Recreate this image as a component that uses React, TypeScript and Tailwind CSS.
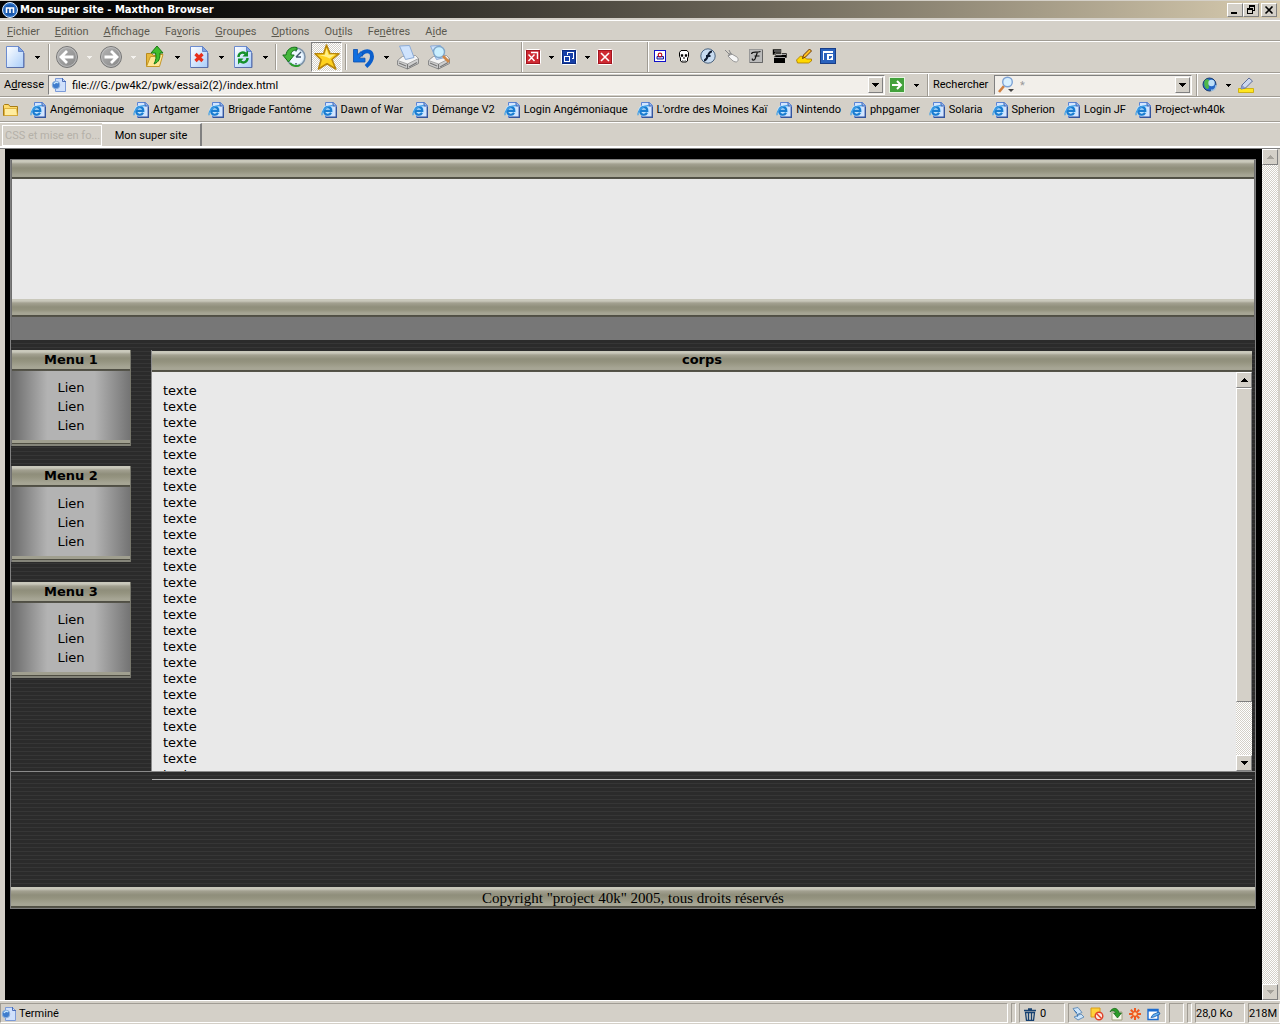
import React from "react";

const raised =
  "border border-t-white border-l-white border-r-[#808080] border-b-[#808080] bg-[#d4d0c8]";
const checker =
  "bg-[conic-gradient(#fff_25%,#d4d0c8_0_50%,#fff_0_75%,#d4d0c8_0)] bg-[length:2px_2px]";
const metal =
  "bg-[linear-gradient(#c9c8bb_0,#c9c8bb_2px,#a3a191_4px,#8f8e7b_8px,#94937f_11px,#a6a594_calc(100%_-_4px),#a6a594_calc(100%_-_2px),#4e4d42_calc(100%_-_2px),#57564c_100%)]";
const stripes =
  "bg-[repeating-linear-gradient(#2b2b2b_0,#2b2b2b_3px,#363636_3px,#363636_4px)]";

function Caret({ faint = false }: { faint?: boolean }) {
  return (
    <svg width="5" height="3" viewBox="0 0 5 3" shapeRendering="crispEdges" aria-hidden="true">
      <path d="M0 0h5v1H4v1H3v1H2V2H1V1H0z" fill={faint ? "#f4f2ee" : "#000"} />
    </svg>
  );
}

function BigCaret({ up = false, faint = false }: { up?: boolean; faint?: boolean }) {
  return (
    <svg width="7" height="4" viewBox="0 0 7 4" shapeRendering="crispEdges" aria-hidden="true">
      <path
        d={up ? "M3 0h1v1h1v1h1v1h1v1H0V3h1V2h1V1h1z" : "M0 0h7v1H6v1H5v1H4v1H3V3H2V2H1V1H0z"}
        fill={faint ? "#a5a29b" : "#000"}
      />
    </svg>
  );
}

function Sheet({ children }: { children?: React.ReactNode }) {
  return (
    <svg width="20" height="24" viewBox="0 0 20 24" aria-hidden="true">
      <defs>
        <linearGradient id="sheet" x1="0" y1="0" x2="1" y2="1">
          <stop offset="0" stopColor="#fff" />
          <stop offset="1" stopColor="#a9cdfa" />
        </linearGradient>
      </defs>
      <path d="M1.5 1.5h12l5 5v16h-17z" fill="url(#sheet)" stroke="#6c8cd0" />
      <path d="M13.5 1.5v5h5z" fill="#7fa4e4" stroke="#5878c0" strokeWidth=".8" />
      <path d="M2 22.5h17V8" fill="none" stroke="#5a6fa8" />
      {children}
    </svg>
  );
}

function RoundArrow({ right = false }: { right?: boolean }) {
  return (
    <svg width="24" height="24" viewBox="0 0 24 24" aria-hidden="true">
      <defs>
        <linearGradient id="disc" x1="0" y1="0" x2="1" y2="1">
          <stop offset="0" stopColor="#b5b5b5" />
          <stop offset="1" stopColor="#858585" />
        </linearGradient>
      </defs>
      <circle cx="12" cy="12" r="10.5" fill="url(#disc)" stroke="#777" />
      <circle cx="12" cy="12" r="9.4" fill="none" stroke="#c4c4c4" strokeWidth=".8" />
      <path
        d={right ? "M5.5 12h12M12 6l6 6-6 6" : "M18.5 12h-12M12 6l-6 6 6 6"}
        fill="none"
        stroke="#fff"
        strokeWidth="2.8"
      />
    </svg>
  );
}

function FolderUp() {
  return (
    <svg width="22" height="24" viewBox="0 0 22 24" aria-hidden="true">
      <path d="M2.5 21.5v-13h5l2 2h7v3" fill="#e7b93c" stroke="#b98a1c" />
      <path d="M2.5 21.5l4-10h5l1.500-2h6l-3.500 12z" fill="#ffe795" stroke="#c6982a" />
      <path d="M7 8l6-7 6 7h-3c0 6-1 9-6 11 2-4 2.500-7 1.500-11z" fill="#3fbd2c" stroke="#187814" />
    </svg>
  );
}

function History() {
  return (
    <svg width="24" height="24" viewBox="0 0 24 24" aria-hidden="true">
      <circle cx="14" cy="12" r="9" fill="#d3e6f6" stroke="#7d92a8" strokeWidth="1.500" />
      <circle cx="14" cy="12" r="7" fill="#eef7ff" />
      <path d="M14 12l5-5M14 12h5M14 5v1.500M14 18v1.500" stroke="#40566e" strokeWidth="1.400" />
      <path d="M15 2.500C9 1 4.500 5 4 10H.8l5.700 7 5.700-7H9C9 6.500 11.500 5 15 5z" fill="#45b63b" stroke="#137019" />
      <path d="M8 18c2 3 7 4 10 2" fill="none" stroke="#2a9d2b" strokeWidth="2" />
    </svg>
  );
}

function Star() {
  return (
    <svg width="26" height="26" viewBox="0 0 26 26" aria-hidden="true">
      <path
        d="M12.500 1l3.500 8.500 9 .2-7 5.800 3.800 9.500-8.800-5.300-8.500 5.300 2.600-9.300L1 9.700l8.700-.2z"
        fill="#ffd21e"
        stroke="#b8860b"
        strokeWidth="1.600"
        strokeLinejoin="round"
      />
      <path d="M12.500 4.500l2 6.200 6.500-.2-5.500 4-3-1.500L5 11h5.800z" fill="#fff08a" />
    </svg>
  );
}

function Undo() {
  return (
    <svg width="24" height="24" viewBox="0 0 24 24" aria-hidden="true">
      <path
        d="M8.500 11C11 5 20 4 20 11.500c0 4-2.500 7-6 10"
        fill="none"
        stroke="#0b5fcc"
        strokeWidth="4"
      />
      <path d="M1.500 4.500h4v5.200l3.500-3 2 2.300-3.700 4.200H13v3.800H1.500z" fill="#0f6fe0" stroke="#0b4fae" strokeWidth=".8" />
    </svg>
  );
}

function Printer({ lens = false }: { lens?: boolean }) {
  return (
    <svg width="24" height="26" viewBox="0 0 24 26" aria-hidden="true">
      <path d="M1.500 16.500l5-4 13-1 3 3v5l-11 5.500-10-4z" fill="#cfcfcf" stroke="#8a8a8a" />
      <path d="M1.500 16.500l10 3.500 11-5.500-3-3-13 1z" fill="#f4f4f4" stroke="#999" strokeWidth=".8" />
      <path d="M3.500 2l10-.5 4.500 12-8.500 2z" fill="#cfe3fd" stroke="#8cabd6" />
      <path d="M11.500 20v5M3 19l7 3M13 23l8-4.500" stroke="#777" strokeWidth="1.200" />
      {lens && (
        <>
          <circle cx="12" cy="8" r="5.500" fill="#c9efff" stroke="#7fa6c9" strokeWidth="1.400" />
          <path d="M16 12l6 6" stroke="#d08848" strokeWidth="2.600" />
        </>
      )}
    </svg>
  );
}

function WindowTile({ kind }: { kind: "group" | "restore" | "close" }) {
  return (
    <svg width="16" height="16" viewBox="0 0 16 16" aria-hidden="true">
      <rect x=".5" y=".5" width="15" height="15" rx="1" fill={kind === "restore" ? "#1740a8" : "#cf2a32"} stroke="#fff" />
      <rect x="1.500" y="1.500" width="13" height="13" fill="none" stroke={kind === "restore" ? "#0c2b80" : "#a3141e"} />
      {kind === "close" && <path d="M4 4l8 8M12 4l-8 8" stroke="#fff" strokeWidth="1.600" />}
      {kind === "group" && (
        <path d="M3.500 5.500l6 6.500M9.500 5.500l-6 6.500M6 3.500h6.500V10" fill="none" stroke="#fff" strokeWidth="1.400" />
      )}
      {kind === "restore" && (
        <path d="M3.500 7.500h5v5h-5zM6.500 5.500v-2h6v6H11" fill="none" stroke="#fff" shapeRendering="crispEdges" />
      )}
    </svg>
  );
}

const plugins: { name: string; art: React.ReactNode }[] = [
  {
    name: "Image",
    art: (
      <>
        <rect x="2.500" y="2.500" width="11" height="11" fill="#fff" stroke="#1010c8" />
        <path d="M5 8.500h6.500V11H5z" fill="#b8c4ff" stroke="#1c1c90" />
        <circle cx="8" cy="7" r="1.800" fill="none" stroke="#c01020" strokeWidth="1.200" />
      </>
    ),
  },
  {
    name: "Skull",
    art: (
      <>
        <path d="M5 2.500h6L12.500 4.500v4L11.500 10v3l-1.500 1H6l-1.500-1v-3L3.500 8.500v-4z" fill="#fff" stroke="#000" />
        <path d="M5 6.500h2V8.500H5zM9 6.500h2V8.500H9zM7.500 9.500h1v1h-1zM6.500 12v1.500M8 12v1.500M9.500 12v1.500" fill="#000" stroke="#000" strokeWidth=".4" />
      </>
    ),
  },
  {
    name: "Flash",
    art: (
      <>
        <circle cx="8" cy="8" r="7.200" fill="#c9dcf0" stroke="#49627e" />
        <path d="M12 3.500c-5 0-3.500 9-8 9M6 8h4.500" fill="none" stroke="#101c30" strokeWidth="2" />
      </>
    ),
  },
  {
    name: "Souris",
    art: (
      <>
        <path d="M6 5l7 4c2 2 1 5-1 5-3 0-5-3-8-6z" fill="#f6f6f6" stroke="#999" />
        <path d="M1 2l5 5M5 2l2 4M4 8l4-2" stroke="#888" fill="none" />
      </>
    ),
  },
  {
    name: "Filtre",
    art: (
      <>
        <rect x="1.500" y="1.500" width="13" height="13" fill="#bbb" stroke="#999" />
        <path d="M2 14.500h12.500V2" fill="none" stroke="#666" />
        <path d="M3.500 6C4 3 8 5 12.500 3.500M9.500 4L7 11c-1 2-3.500 1-2.500-.5M6.500 8h5" fill="none" stroke="#111" strokeWidth="1.200" />
      </>
    ),
  },
  {
    name: "Fenêtres",
    art: (
      <>
        <path d="M.5 1h9v6h-9zM3 5h12v5H3z" fill="#000" stroke="#d4d0c8" strokeWidth=".6" />
        <path d="M2 8.500h11V15H2z" fill="#000" />
        <path d="M2 3h7M4 6.500h10M2 9.500h11" stroke="#eee" strokeWidth=".7" />
      </>
    ),
  },
  {
    name: "Notes",
    art: (
      <>
        <path d="M.5 12l4-4 4 1 2 2h5v2l-3 2h-11z" fill="#ffd800" stroke="#a87800" strokeWidth=".8" />
        <path d="M6.500 10.500L7.500 7l6-6 2 2-6 6z" fill="#ffc020" stroke="#6a3808" />
      </>
    ),
  },
  {
    name: "Panneau",
    art: (
      <>
        <rect x=".5" y=".5" width="15" height="15" fill="#2a62bd" stroke="#173d88" />
        <path d="M3 3h10v2H3zM3 3h1v9H3zM7 6h6v6H7z" fill="#fff" />
        <path d="M9 8h3v1l-2 2H9z" fill="#2a62bd" />
      </>
    ),
  },
];

function PageGlobe() {
  return (
    <svg width="16" height="16" viewBox="0 0 16 16" aria-hidden="true">
      <path d="M4.500 1.500h7l3 3v10h-10z" fill="#cfe0fb" stroke="#7c9bd8" />
      <path d="M11.500 1v3.500H15" fill="none" stroke="#4a6cb8" />
      <circle cx="5" cy="8" r="3.800" fill="#3e7ccc" stroke="#8ab0dc" />
      <path d="M3 7c1-2 3-2 4-1" fill="none" stroke="#c8e8ff" strokeWidth="1.400" />
    </svg>
  );
}

function IePage() {
  return (
    <svg className="shrink-0" width="16" height="16" viewBox="0 0 16 16" aria-hidden="true">
      <path d="M4.500 .5h8l3 3v12h-11z" fill="#d3e5ff" stroke="#5a83d4" />
      <path d="M12 .5v3.500h3.500" fill="#8fb2ea" stroke="#3d62ae" />
      <path d="M15.300 5v10.300H5" fill="none" stroke="#33559f" strokeWidth="1.400" />
      <circle cx="6.800" cy="8.600" r="5.600" fill="#bfe3ff" />
      <path d="M3 8.900h7.300C10.300 3.800 3.200 3.800 3.200 8.900c0 4.600 5.400 4.800 6.800 1.900" fill="none" stroke="#1a7cd0" strokeWidth="2.100" />
      <path d="M1.200 13.200C-.2 9.500 6 3 12 3.800" fill="none" stroke="#3f9fe6" strokeWidth="1.200" />
    </svg>
  );
}

function SplitButton({ label, faint, children }: { label: string; faint?: boolean; children: React.ReactNode }) {
  return (
    <div className="flex h-7 items-center">
      <button aria-label={label} className="flex w-6 items-center justify-center">
        {children}
      </button>
      <button aria-label={`${label} : options`} className="flex h-6 w-5 items-center justify-center">
        <Caret faint={faint} />
      </button>
    </div>
  );
}

function Groove({ tall = false }: { tall?: boolean }) {
  return (
    <span
      className={
        (tall ? "self-stretch" : "h-[26px]") + " w-[2px] shrink-0 border-l border-l-[#a09c94] border-r border-r-white"
      }
    />
  );
}

const menus = [
  ["", "F", "ichier"],
  ["", "E", "dition"],
  ["", "A", "ffichage"],
  ["Fa", "v", "oris"],
  ["", "G", "roupes"],
  ["", "O", "ptions"],
  ["Ou", "t", "ils"],
  ["Fe", "n", "êtres"],
  ["A", "i", "de"],
];

const bookmarks = [
  "Angémoniaque",
  "Artgamer",
  "Brigade Fantôme",
  "Dawn of War",
  "Démange V2",
  "Login Angémoniaque",
  "L'ordre des Moines Kaï",
  "Nintendo",
  "phpgamer",
  "Solaria",
  "Spherion",
  "Login JF",
  "Project-wh40k",
];

function TitleBar() {
  const control = `flex h-[14px] w-4 items-center justify-center ${raised}`;
  return (
    <header className="flex h-5 shrink-0 items-center border-b-2 border-t border-[#d4d0c8] bg-gradient-to-r from-[#050505] from-10% to-[#d8ccb0] pl-[2px] pr-[3px]">
      <svg width="16" height="16" viewBox="0 0 16 16" aria-hidden="true">
        <circle cx="8" cy="8" r="7.500" fill="#2b6fc4" stroke="#dcecff" />
        <circle cx="8" cy="8" r="5.500" fill="#1a58ac" />
        <path d="M4.500 11V6h7v5M8 6v5" fill="none" stroke="#fff" strokeWidth="1.600" />
      </svg>
      <h1 className="ml-[2px] flex-1 font-['DejaVu_Sans'] text-[10px] font-bold leading-4 text-white">
        Mon super site - Maxthon Browser
      </h1>
      <button aria-label="Réduire" className={control}>
        <svg width="10" height="10" viewBox="0 0 10 10"><path d="M1 7h6v2H1z" /></svg>
      </button>
      <button aria-label="Restaurer" className={control}>
        <svg width="10" height="10" viewBox="0 0 10 10" shapeRendering="crispEdges">
          <path d="M3 0h6v6H7V5h1V2H4v1H3zM1 3h6v6H1zM2 5v3h4V5z" fillRule="evenodd" />
        </svg>
      </button>
      <button aria-label="Fermer" className={`ml-[2px] ${control}`}>
        <svg width="10" height="10" viewBox="0 0 10 10"><path d="M1.500 1.500l7 7M8.500 1.500l-7 7" stroke="#000" strokeWidth="1.600" /></svg>
      </button>
    </header>
  );
}

function Toolbar() {
  return (
    <div className="flex h-8 shrink-0 border-b border-b-[#a09c94] border-t border-t-white">
      <div className="flex w-[521px] items-center pl-[3px]">
        <SplitButton label="Nouveau"><Sheet /></SplitButton>
        <span className="ml-px mr-[5px] flex"><Groove /></span>
        <SplitButton label="Précédent" faint><RoundArrow /></SplitButton>
        <SplitButton label="Suivant" faint><RoundArrow right /></SplitButton>
        <SplitButton label="Dossier parent"><FolderUp /></SplitButton>
        <SplitButton label="Arrêter">
          <Sheet><path d="M6.500 9l7 7M13.500 9l-7 7" stroke="#e8301c" strokeWidth="3.200" /></Sheet>
        </SplitButton>
        <SplitButton label="Actualiser">
          <Sheet>
            <path d="M5.500 12c0-4 4-5.500 7-3.500M14.500 13c0 4-4 5.500-7 3.500" fill="none" stroke="#14902a" strokeWidth="2.400" />
            <path d="M15 5.500v6H9.500zM5 19.500v-6h5.500z" fill="#14902a" />
          </Sheet>
        </SplitButton>
        <Groove />
        <button aria-label="Historique" className="ml-[2px] flex w-[30px] justify-center"><History /></button>
        <button
          aria-label="Favoris"
          className={`ml-[2px] flex h-[30px] w-[31px] items-center justify-center border border-b-white border-l-[#808080] border-r-white border-t-[#808080] ${checker}`}
        >
          <Star />
        </button>
        <span className="ml-[3px] mr-[5px] flex"><Groove /></span>
        <SplitButton label="Annuler"><Undo /></SplitButton>
        <button aria-label="Imprimer" className="flex w-6 justify-center"><Printer /></button>
        <button aria-label="Aperçu" className="flex w-[38px] justify-center"><Printer lens /></button>
      </div>
      <Groove tall />
      <div className="flex w-[124px] items-center pl-[2px]">
        <button aria-label="Fermer le groupe" className="w-4"><WindowTile kind="group" /></button>
        <button aria-label="Groupe : options" className="flex h-6 w-5 items-center justify-center"><Caret /></button>
        <button aria-label="Restaurer la page" className="w-4"><WindowTile kind="restore" /></button>
        <button aria-label="Restaurer : options" className="flex h-6 w-5 items-center justify-center"><Caret /></button>
        <button aria-label="Fermer la page" className="w-4"><WindowTile kind="close" /></button>
      </div>
      <Groove tall />
      <div className="flex flex-1 items-center gap-2 pb-[2px] pl-[3px]">
        {plugins.map((p) => (
          <button key={p.name} aria-label={p.name}>
            <svg width="16" height="16" viewBox="0 0 16 16">{p.art}</svg>
          </button>
        ))}
      </div>
    </div>
  );
}

function AddressBar() {
  const field =
    "flex h-5 items-center border border-t-[#808080] border-l-[#808080] border-r-white border-b-white bg-[#f2efea]";
  const drop = `flex h-4 w-[15px] shrink-0 items-center justify-center ${raised}`;
  return (
    <form className="flex h-6 shrink-0 items-center border-b border-b-[#a09c94] border-t border-t-white pl-1 text-black">
      <label htmlFor="address" className="w-11">A<u>d</u>resse</label>
      <div className={`${field} flex-1 pl-[2px] pr-px`}>
        <PageGlobe />
        <input id="address" defaultValue="file:///G:/pw4k2/pwk/essai2(2)/index.html" className="ml-[5px] h-4 min-w-0 flex-1 bg-transparent outline-none" />
        <button type="button" aria-label="Adresses récentes" className={drop}><BigCaret /></button>
      </div>
      <button type="button" aria-label="Aller" className="ml-1 w-4">
        <svg width="16" height="16" viewBox="0 0 16 16">
          <rect x=".5" y=".5" width="15" height="15" fill="#43a13c" stroke="#e6f4e0" />
          <path d="M3 8h9M8 4l4 4-4 4" fill="none" stroke="#fff" strokeWidth="2" />
        </svg>
      </button>
      <button type="button" aria-label="Aller : options" className="flex h-4 w-[22px] items-center justify-center"><Caret /></button>
      <Groove tall />
      <label htmlFor="search" className="ml-1 w-[61px]">Rechercher</label>
      <div className={`${field} w-[198px] pl-[2px] pr-px`}>
        <svg width="18" height="18" viewBox="0 0 18 18" aria-hidden="true">
          <path d="M2 16l5-6" stroke="#d08040" strokeWidth="2.600" />
          <circle cx="10.500" cy="6" r="4.800" fill="#d8f0ff" stroke="#7da2d4" strokeWidth="1.400" />
          <path d="M11 13h6l-3 3z" fill="#444" />
        </svg>
        <input id="search" defaultValue="*" className="ml-[3px] h-4 min-w-0 flex-1 bg-transparent pl-[2px] text-[#999] outline-none" />
        <button type="button" aria-label="Recherches récentes" className={drop}><BigCaret /></button>
      </div>
      <span className="ml-1 mr-1 flex self-stretch"><Groove tall /></span>
      <button type="button" aria-label="Moteur" className="w-4">
        <svg width="16" height="16" viewBox="0 0 16 16">
          <circle cx="7.500" cy="7.500" r="6.500" fill="#2468c8" stroke="#183c70" />
          <path d="M3 3c3-2 5 0 4 3s1 4-1 6c-3 0-5-5-3-9z" fill="#50b848" />
          <circle cx="9.500" cy="6" r="3.200" fill="#d8f4ff" opacity=".85" />
          <path d="M9 13c3 1 5-2 5-5" fill="none" stroke="#9cc4e8" strokeWidth="1.400" />
        </svg>
      </button>
      <button type="button" aria-label="Moteur : options" className="flex h-4 w-5 items-center justify-center"><Caret /></button>
      <button type="button" aria-label="Surligner" className="mr-[26px] w-4">
        <svg width="16" height="16" viewBox="0 0 16 16">
          <path d="M.5 11.500h15v4H.5z" fill="#ffe620" stroke="#c8a800" strokeWidth=".8" />
          <path d="M3 12l1-4 7-7 3.500 3-7 7z" fill="#ccd8ee" stroke="#5c6c98" />
          <path d="M3 12l1-4 3.500 3z" fill="#8c9cc8" />
        </svg>
      </button>
    </form>
  );
}

function ScrollBar({ inner = false }: { inner?: boolean }) {
  const button = `flex h-4 w-full shrink-0 items-center justify-center ${raised}`;
  return (
    <div className={`flex w-4 shrink-0 flex-col ${checker}`}>
      <button aria-label="Défiler vers le haut" className={button}><BigCaret up faint={!inner} /></button>
      {inner && <div className={`h-[314px] w-full ${raised}`} />}
      <div className="flex-1" />
      <button aria-label="Défiler vers le bas" className={button}><BigCaret faint={!inner} /></button>
    </div>
  );
}

function MenuBox({ title }: { title: string }) {
  return (
    <nav aria-label={title} className="border-x border-l-[#6e6e6e] border-r-[#77776c]">
      <h2 className={`h-[21px] text-center text-[13px] font-bold leading-[19px] ${metal}`}>{title}</h2>
      <ul className="bg-[linear-gradient(90deg,#6c6c6c_0,#b3b3b3_30%,#b3b3b3_70%,#747474_100%)] pb-[5px] pt-[7px] text-center text-[13px] leading-[19px]">
        {[1, 2, 3].map((n) => (
          <li key={n}><a href="#lien">Lien</a></li>
        ))}
      </ul>
      <div className="h-[6px] bg-[linear-gradient(#a09f8f_0,#a09f8f_3px,#4e4d42_3px,#4e4d42_4px,#85857a_4px)]" />
    </nav>
  );
}

function SitePage() {
  return (
    <div className="border border-[#808080] font-['DejaVu_Sans',sans-serif] text-black">
      <div className="border-x border-x-[#6e6e6e]">
        <div className={`h-[19px] ${metal}`} />
        <div className="h-[120px] bg-[#e9e9e9]" />
        <div className={`h-[18px] ${metal}`} />
        <div className="h-[23px] bg-[#777]" />
      </div>
      <div className={`flex items-start pr-[3px] pt-[10px] ${stripes}`}>
        <aside className="flex w-[120px] shrink-0 flex-col gap-5">
          <MenuBox title="Menu 1" />
          <MenuBox title="Menu 2" />
          <MenuBox title="Menu 3" />
        </aside>
        <main className="ml-5 min-w-0 flex-1 border-l border-l-[#8a8a8a] pt-px">
          <h2 className={`h-[21px] text-center text-[13px] font-bold leading-[17px] ${metal}`}>corps</h2>
          <div className="flex h-[399px] bg-[#e9e9e9]">
            <div className="flex-1 overflow-hidden px-[11px] pt-[11px] text-[13px] leading-4">
              {Array.from({ length: 25 }, (_, i) => (
                <p key={i}>texte</p>
              ))}
            </div>
            <ScrollBar inner />
          </div>
        </main>
      </div>
      <div className={`h-[116px] border-t border-t-[#8a8a8a] pl-[141px] pr-[3px] pt-[7px] ${stripes}`}>
        <hr className="border-t border-t-[#b0b0b0]" />
      </div>
      <footer className={`h-[21px] text-center font-['Liberation_Serif'] text-[15px] leading-[22px] ${metal}`}>
        Copyright "project 40k" 2005, tous droits réservés
      </footer>
    </div>
  );
}

function StatusBar() {
  const cell = "flex h-5 items-center border border-b-white border-l-[#a09c94] border-r-white border-t-[#a09c94] pt-[2px]";
  return (
    <footer className="flex h-[22px] shrink-0 items-center gap-[3px] text-black">
      <div className={`${cell} flex-1 gap-[2px]`}><PageGlobe />Terminé</div>
      <div className={`${cell} w-[5px]`} />
      <div className={`${cell} w-[46px] gap-1 pl-1`}>
        <svg width="12" height="13" viewBox="0 0 12 13" aria-hidden="true">
          <path d="M0 2.500h12M4 1h4M1.500 4.500h9l-1 8h-7zM4.500 5v7M7.500 5v7" fill="none" stroke="#164070" strokeWidth="1.300" />
        </svg>
        0
      </div>
      <div className={`${cell} w-[98px] gap-[5px] pl-[2px]`}>
        <svg width="14" height="14" viewBox="0 0 14 14" aria-hidden="true">
          <path d="M2 1.500l5-1 4 5-5 2zM3 10l7-3 3 3-6 3z" fill="#cce4fa" stroke="#6890b8" />
          <path d="M3 3l3 3M7 7l-1 3" stroke="#3d78b4" />
        </svg>
        <svg width="14" height="14" viewBox="0 0 14 14" aria-hidden="true">
          <path d="M1 1h9v9H1z" fill="#ffd23c" stroke="#d89c18" />
          <circle cx="9" cy="9" r="3.800" fill="#fbe8e0" stroke="#e04028" strokeWidth="1.400" />
          <path d="M6.500 6.500l5 5" stroke="#e04028" strokeWidth="1.400" />
        </svg>
        <svg width="14" height="14" viewBox="0 0 14 14" aria-hidden="true">
          <path d="M3 5h10v8H3z" fill="#f5f5e8" stroke="#a0a080" />
          <path d="M1 5c2-5 8-5 9 1h2.500L8.500 11l-4-5H7C6 3.500 3 3 1 5z" fill="#2c9c28" stroke="#126414" strokeWidth=".7" />
        </svg>
        <svg width="14" height="14" viewBox="0 0 14 14" aria-hidden="true">
          <path d="M7 1v12M1 7h12M2.800 2.800l8.400 8.400M11.200 2.800l-8.400 8.400" stroke="#ef5a20" strokeWidth="2" />
          <circle cx="7" cy="7" r="1.800" fill="#ffd8a8" />
        </svg>
        <svg width="14" height="14" viewBox="0 0 14 14" aria-hidden="true">
          <path d="M1 2.500h10v10H1z" fill="#fff" stroke="#1c6cd0" strokeWidth="1.400" />
          <path d="M1 3.500h10" stroke="#1c6cd0" strokeWidth="2" />
          <path d="M4 10.500l2-3 6-2.500 1 2-6 3z" fill="#68b4f4" stroke="#1858a8" strokeWidth=".8" />
        </svg>
      </div>
      <div className={`${cell} w-[15px]`} />
      <div className={`${cell} w-[5px]`} />
      <div className={`${cell} w-[50px]`}>28,0 Ko</div>
      <div className={`${cell} w-8 whitespace-nowrap`}>218M</div>
    </footer>
  );
}

export default function App() {
  return (
    <div className="flex min-h-screen flex-col bg-[#d4d0c8] font-['Roboto',sans-serif] text-[11px] leading-[14px]">
      <TitleBar />
      <div role="menubar" className="flex h-[21px] shrink-0 items-center gap-[15px] border-b border-b-[#a09c94] border-t border-t-white pl-[7px] pt-[2px] text-[#5c5a50]">
        {menus.map(([a, b, c]) => (
          <button key={a + b + c} role="menuitem">{a}<u>{b}</u>{c}</button>
        ))}
      </div>
      <Toolbar />
      <AddressBar />
      <div className="flex h-[25px] shrink-0 items-center border-b border-b-[#a09c94] border-t border-t-white pl-[3px] text-black">
        <button aria-label="Favoris" className="mr-[11px] w-4">
          <svg width="16" height="14" viewBox="0 0 16 14">
            <path d="M.5 12.500v-10l1-1h4l1.500 2h7.500v9z" fill="#ffdc6c" stroke="#a87c14" />
            <path d="M1.500 5.500h12l1 7h-13z" fill="#ffeda0" stroke="#d8a830" strokeWidth=".8" />
          </svg>
        </button>
        <div className="flex gap-[9px]">
          {bookmarks.map((b) => (
            <a key={b} href="#favori" className="flex items-center gap-1 whitespace-nowrap"><IePage />{b}</a>
          ))}
        </div>
      </div>
      <div role="tablist" className="flex h-[26px] shrink-0 items-end border-b-2 border-b-white border-t border-t-white pl-[2px]">
        <button role="tab" aria-selected="false" className="h-[21px] w-[100px] overflow-hidden whitespace-nowrap border border-white px-[2px] text-left text-[#b5b1a8]">CSS et mise en fo...</button>
        <button role="tab" aria-selected="true" className="h-[23px] w-[100px] border-r-2 border-t border-r-[#808080] border-t-white pt-[2px] text-black">Mon super site</button>
      </div>
      <div className="flex flex-1 border-t border-t-[#808080] pr-[2px]">
        <div className="min-w-0 flex-1 border-l-[5px] border-l-[#d4d0c8] bg-black pb-20 pl-[5px] pr-[6px] pt-[10px]">
          <SitePage />
        </div>
        <ScrollBar />
      </div>
      <div className="h-[2px] shrink-0 border-t border-t-white" />
      <StatusBar />
    </div>
  );
}
